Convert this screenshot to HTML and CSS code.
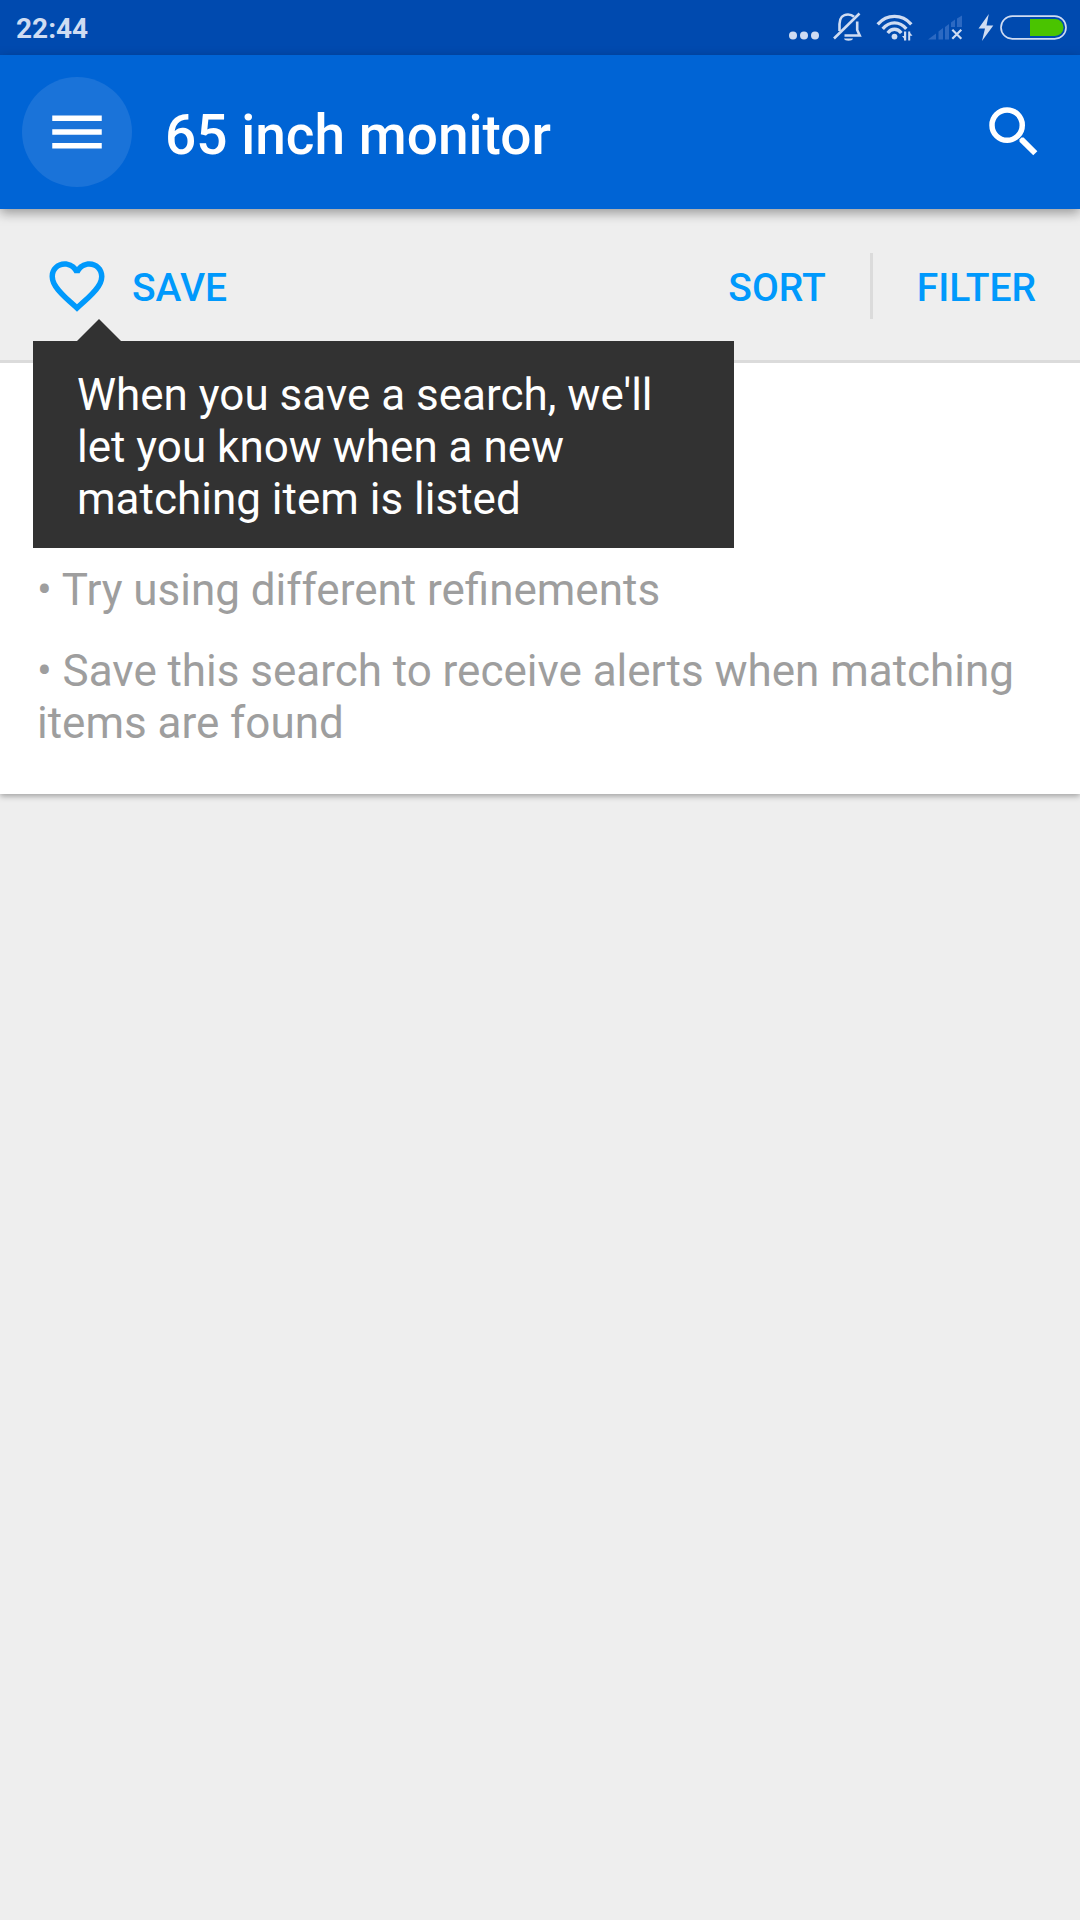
FILE: index.html
```html
<!DOCTYPE html>
<html lang="en">
<head>
<meta charset="utf-8">
<title>65 inch monitor</title>
<link rel="stylesheet" href="styles.css">
</head>
<body>
<div class="status-bar">
  <span class="clock">22:44</span>
  <svg class="status-icons" width="300" height="55" viewBox="780 0 300 55">
    <g fill="#cfdcf2">
      <circle cx="793" cy="35.5" r="4"/><circle cx="804" cy="35.5" r="4"/><circle cx="815" cy="35.5" r="4"/>
    </g>
    <g fill="none" stroke="#cfdcf2" stroke-width="2.600">
      <path d="M839.5 31V24C839.5 18 843 14.5 848 14.5c2.500 0 4.500.8 6 2.200M857.200 21.500V30l2.500 5.500H844.500"/>
      <path d="M834 38.500 859.500 13.500"/>
    </g>
    <path d="M844 38.500h9c-.5 3-8.500 3-9 0z" fill="#cfdcf2"/>
    <g fill="none" stroke="#cfdcf2" stroke-width="3.300">
      <path d="M877.700 24.300C887 13.800 902 13.800 911.300 24.300"/>
      <path d="M882.700 28.900C889.500 20.900 899.500 20.900 906.300 28.900"/>
      <path d="M887.700 33C891.500 28 897.500 28 901.300 33"/>
    </g>
    <circle cx="894.500" cy="36.600" r="2.900" fill="#cfdcf2"/>
    <path d="M904 31.500h2.200v9h-2.200v-2l-2-2.500h2zM908.200 31.500h2v1.500l2.300 2.800h-2.300v4.700h-2z" fill="#cfdcf2"/>
    <g fill="#2c69c2">
      <path d="M928 39.500 936 33.500V39.500zM938.500 31.500 943 28V39.500H938.500zM945 27 949 24V39.500H945zM951 22.500 955 19.500V27H951zM957 18.500 962 15.500V27H957z"/>
    </g>
    <path d="M952.300 29.800 961.300 38.800M961.300 29.800 952.300 38.800" stroke="#cfdcf2" stroke-width="2.200"/>
    <path d="M988.800 14 978.500 28.500H985L982 41 993.300 25.500H986.500z" fill="#cfdcf2"/>
    <rect x="1001" y="16.200" width="65" height="22.600" rx="11.300" fill="none" stroke="#cfdcf2" stroke-width="1.700"/>
    <path d="M1030 19H1055A8.500 8.500 0 0 1 1055 36H1030z" fill="#4ac400"/>
  </svg>
</div>
<header class="app-bar">
  <button class="menu" aria-label="Menu"><svg class="icon" viewBox="0 0 24 24"><path d="M3 6h18v2H3zM3 11h18v2H3zM3 16h18v2H3z"/></svg></button>
  <h1 class="title">65 inch monitor</h1>
  <svg class="icon" viewBox="0 0 24 24"><circle cx="9.500" cy="9.500" r="5.500" fill="none" stroke="#fff" stroke-width="2"/><path d="M14 14.700 14.700 14H15.500L20.490 19 19 20.490 14 15.500z"/></svg>
</header>
<div class="toolbar">
  <div class="save">
    <svg class="icon" viewBox="0 0 24 24"><path d="M16.500 3c-1.740 0-3.410.81-4.500 2.090C10.910 3.810 9.240 3 7.500 3 4.420 3 2 5.420 2 8.500c0 3.780 3.400 6.860 8.550 11.540L12 21.350l1.450-1.320C18.600 15.360 22 12.280 22 8.500 22 5.420 19.580 3 16.500 3zm-4.400 15.550l-.1.100-.1-.1C7.140 14.240 4 11.390 4 8.500 4 6.500 5.500 5 7.500 5c1.540 0 3.040.99 3.570 2.360h1.870C13.460 5.990 14.960 5 16.500 5c2 0 3.500 1.500 3.500 3.500 0 2.890-3.140 5.740-7.900 10.050z"/></svg>
    <span>SAVE</span>
    <div class="tooltip">When you save a search, we'll let you know when a new matching item is listed</div>
  </div>
  <span class="sort">SORT</span>
  <span class="divider"></span>
  <span class="filter">FILTER</span>
</div>
<main class="tips">
  <p>• Try using different refinements</p>
  <p>• Save this search to receive alerts when matching items are found</p>
</main>
</body>
</html>
```
FILE: styles.css
```css
* { box-sizing: border-box; }
body {
  margin: 0;
  height: 1920px;
  overflow: hidden;
  background: #eee;
  font-family: Roboto, sans-serif;
  font-size: 44px;
  line-height: 52px;
}
.icon { width: 66px; height: 66px; fill: currentColor; flex: none; }
.status-bar {
  height: 55px;
  display: flex;
  justify-content: space-between;
  background: #004aaf;
}
.clock {
  padding-left: 16px;
  font-size: 28px;
  font-weight: 700;
  line-height: 58px;
  color: #cfdcf2;
}
.app-bar {
  position: relative;
  height: 154px;
  display: flex;
  align-items: center;
  padding: 0 33px 0 22px;
  background: #0064d5;
  color: #fff;
  box-shadow: 0 4px 11px rgba(0, 0, 0, .36);
}
.menu {
  width: 110px;
  height: 110px;
  padding: 22px;
  border: 0;
  border-radius: 50%;
  background: #1a73d9;
  color: #fff;
}
.menu .icon { display: block; }
.title {
  flex: 1;
  margin: 6px 0 0 33px;
  font-size: 55px;
  font-weight: 500;
  line-height: 66px;
}
.toolbar {
  height: 154px;
  display: flex;
  align-items: center;
  padding: 3px 44px 0;
  border-bottom: 3px solid #dbdbdb;
  color: #0099fc;
  font-size: 39px;
  font-weight: 500;
}
.toolbar span { padding-top: 3px; }
.save {
  position: relative;
  flex: 1;
  display: flex;
  align-items: center;
  gap: 22px;
}
.toolbar .divider {
  width: 3px;
  height: 66px;
  margin: 0 44px;
  padding: 0;
  background: #dbdbdb;
}
.tooltip {
  position: absolute;
  z-index: 1;
  left: -11px;
  top: 88px;
  width: 701px;
  height: 207px;
  padding: 28px 44px;
  background: #323232;
  color: #fff;
  font-size: 44px;
  font-weight: 400;
}
.tooltip::before {
  content: "";
  position: absolute;
  left: 44px;
  top: -22px;
  border: 22px solid transparent;
  border-top: 0;
  border-bottom-color: #323232;
}
.tips {
  height: 431px;
  padding: 201px 37px 0;
  background: #fff;
  color: #9e9e9e;
  word-spacing: -.15px;
  box-shadow: 0 2px 6px rgba(0, 0, 0, .34);
  clip-path: inset(0 0 -12px);
}
.tips p { margin: 0 0 29px; }
```
